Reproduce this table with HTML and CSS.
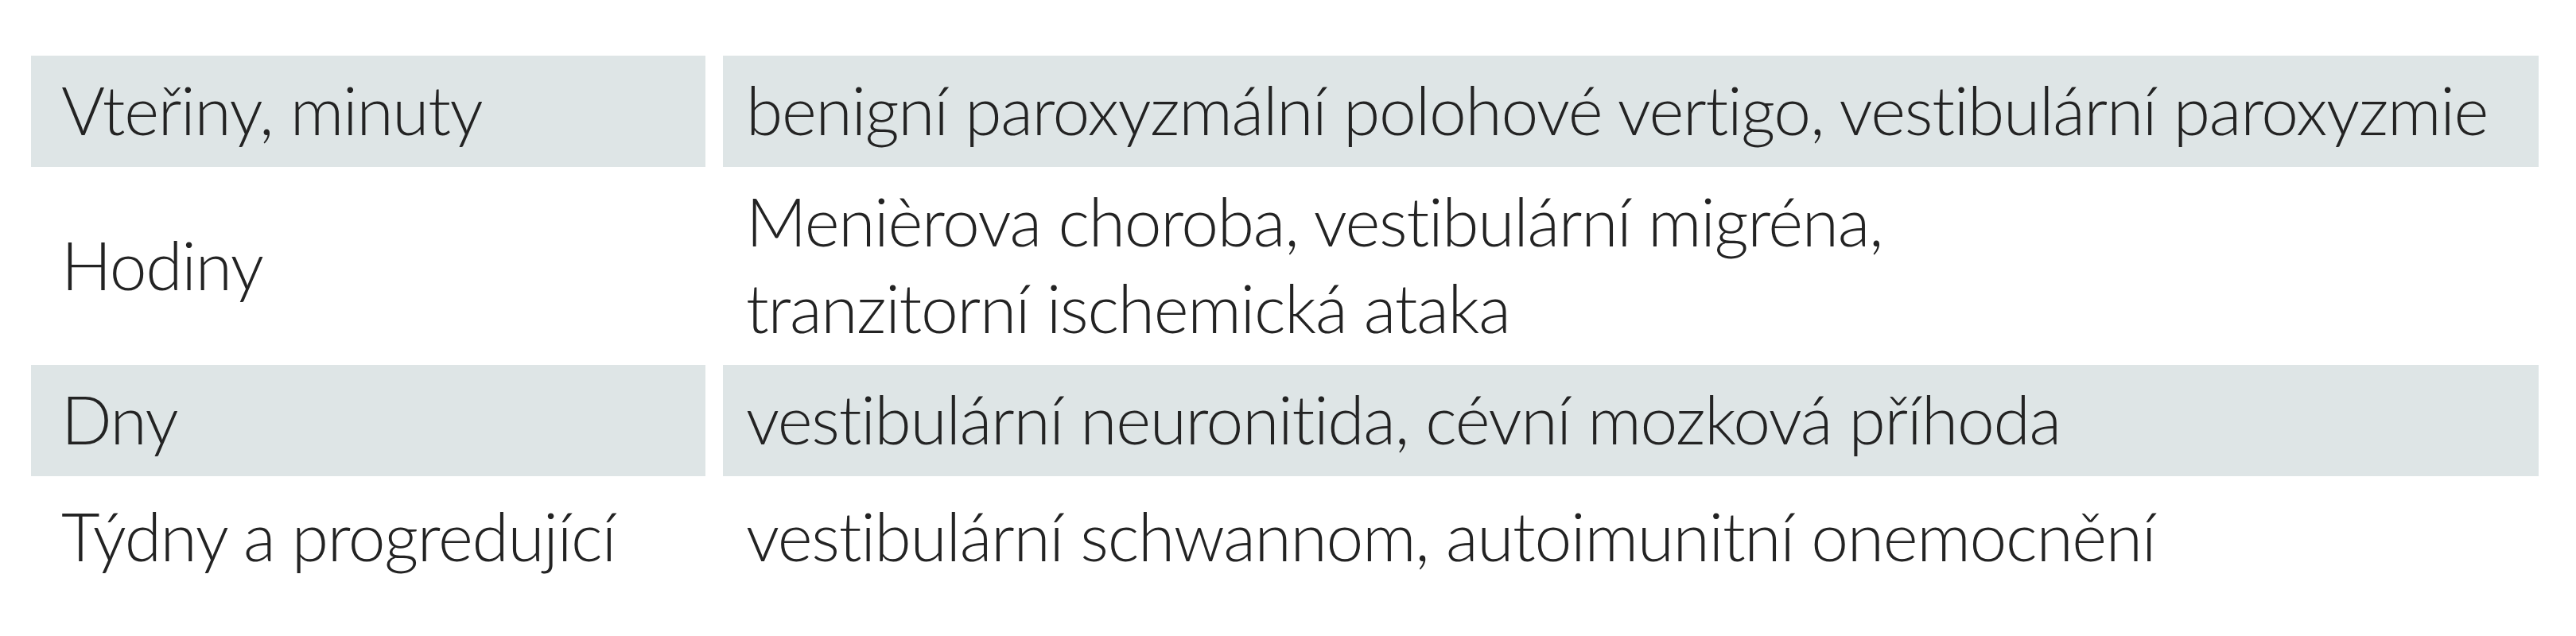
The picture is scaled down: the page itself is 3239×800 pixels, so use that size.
FILE: index.html
```html
<!DOCTYPE html>
<html lang="cs">
<head>
<meta charset="utf-8">
<title>Doba trvání závratě</title>
<link rel="stylesheet" href="styles.css">
</head>
<body>
<div class="table">
  <div class="cell key shade">Vteřiny, minuty</div>
  <div class="cell val shade">benigní paroxyzmální polohové vertigo, vestibulární paroxyzmie</div>

  <div class="cell key">Hodiny</div>
  <div class="cell val">Menièrova choroba, vestibulární migréna,<br>tranzitorní ischemická ataka</div>

  <div class="cell key shade">Dny</div>
  <div class="cell val shade">vestibulární neuronitida, cévní mozková příhoda</div>

  <div class="cell key last">Týdny a progredující</div>
  <div class="cell val last">vestibulární schwannom, autoimunitní onemocnění</div>
</div>
</body>
</html>
```
FILE: styles.css
```css
html, body {
  margin: 0;
  padding: 0;
  background: #ffffff;
}

.table {
  display: grid;
  grid-template-columns: 848px 2283px;
  column-gap: 22px;
  margin: 70px 0 0 39px;
  font-family: "Lato", "Open Sans", sans-serif;
  font-weight: 300;
  font-size: 84px;
  line-height: 109px;
  letter-spacing: -1.3px;
  color: #232323;
}

.cell {
  display: flex;
  align-items: center;
  padding: 13px 20px 18px 38px;
  white-space: nowrap;
}

.val {
  padding-left: 29px;
  display: block;
  align-self: stretch;
}

.key {
  align-self: stretch;
}

.shade {
  background: #dee5e6;
}

.last {
  padding-top: 20px;
}
```
